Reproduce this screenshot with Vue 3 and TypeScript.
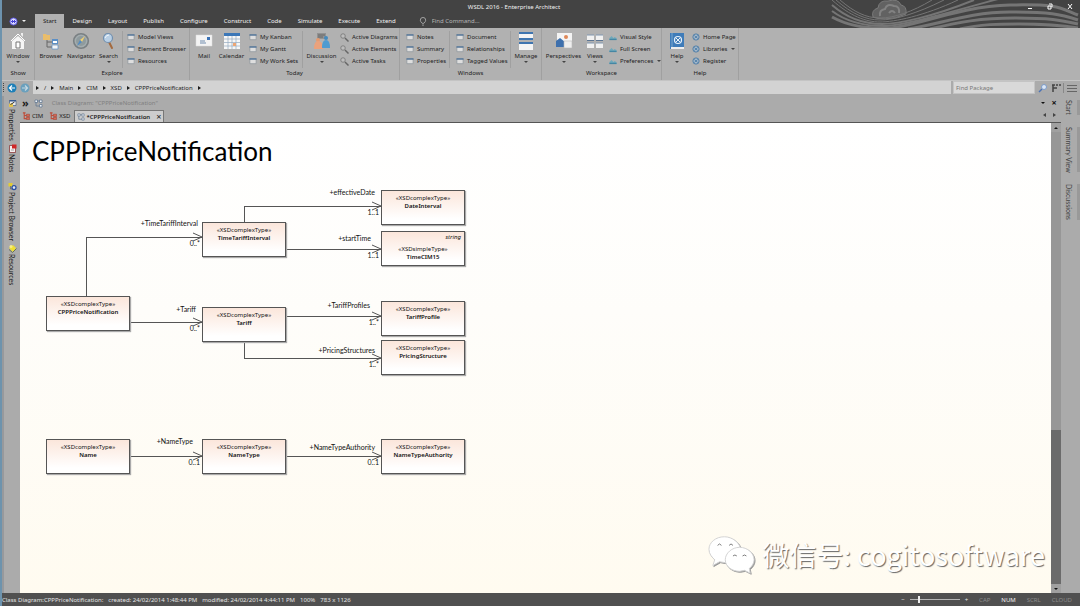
<script setup lang="ts">
import { ref } from 'vue'

interface BigTool { kind: 'big'; label: string; icon: string; menu?: boolean }
interface ListTool { kind: 'list'; icon: string; items: { label: string; menu?: boolean }[] }
interface Group { name: string; tools: (BigTool | ListTool)[] }

const icons: Record<string, string> = {
  house: '<path d="M1 9 9 1l8 8-1 1-7-7-7 7z" fill="#fff" stroke="#8d8d8d" stroke-width=".5"/><path d="M12 1h2v4l-2-2z" fill="#eee"/><path d="M3 9l6-5 6 5v8H3z" fill="#f6f6f6"/><path d="M7 10h4v6H7z" fill="#fff" stroke="#777" stroke-width="1"/>',
  browser: '<path d="M1 2h3l1 1h3v5H1z" fill="#e9bd6b"/><path d="M5 8v7h5M5 10h5" fill="none" stroke="#666"/><path d="M10 7h6v5h-6z" fill="#5b8fc6"/><path d="M11 9h4v2h-4z" fill="#fff"/><path d="M10 13h6v4h-6z" fill="#f5f5f5" stroke="#5b8fc6" stroke-width=".7"/>',
  compass: '<circle cx="9" cy="9" r="7.3" fill="#a4adaf" stroke="#7a8083" stroke-width="1.6"/><circle cx="9" cy="9" r="5" fill="#8f9b9e"/><path d="M13 4l-3 6-2-2z" fill="#f1cf70"/><path d="M5 14l3-6 2 2z" fill="#4f8bc4"/>',
  search: '<path d="M9 10l3 6" stroke="#a46a3e" stroke-width="2" stroke-linecap="round"/><circle cx="8" cy="6" r="4.5" fill="#b9d0e6" stroke="#718fae" stroke-width="1.2"/><path d="M5 6q1-3 4-3" stroke="#f3f8fc" fill="none"/>',
  mail: '<path d="M1 3h16v11H1z" fill="#f4f4f4" stroke="#ddd" stroke-width=".5"/><path d="M12 5h3v3h-3z" fill="#3b72b5"/><path d="M5 9h5M5 11h6" stroke="#718cad"/>',
  calendar: '<path d="M1 1h16v16H1z" fill="#f7f7f7"/><path d="M1 1h16v3H1z" fill="#3b77b8"/><path d="M5 4v13M9 4v13M13 4v13M1 7h16M1 10.500h16M1 14h16" stroke="#92a9c0" stroke-width=".7"/><path d="M10 11h3v3h-3z" fill="#eda675"/>',
  people: '<path d="M4 1h9v6H4z" fill="#929292"/><path d="M5 3h7M5 5h5" stroke="#555" stroke-width=".7"/><circle cx="5" cy="8" r="2" fill="#e69b70"/><path d="M1 17q0-8 4-8 5 0 5 8z" fill="#eba27c"/><circle cx="13" cy="6" r="2" fill="#438abe"/><path d="M9 16q0-8 4-8t4 8z" fill="#4f9bd0"/>',
  manage: '<path d="M2 0h14v8H2zM2 10h14v8H2z" fill="#f4f4f4"/><path d="M2 0h14v2H2zM2 6h14v2H2zM2 10h14v2H2z" fill="#3f75b0"/>',
  perspectives: '<path d="M2 1h15v13H2z" fill="#f4f4f4"/><circle cx="11" cy="5" r="2" fill="#dd8758"/><path d="M1 15V9l4-3 5 4v5z" fill="#3e70ad"/><path d="M9 9h8v7H9z" fill="#eee" stroke="#bbb" stroke-width=".6"/>',
  views: '<path d="M1 3h7v6H1zM10 3h7v6h-7zM1 11h7v5H1zM10 11h7v5h-7z" fill="#f1f1f1"/><path d="M1 8h7v1H1zM10 8h7v1h-7z" fill="#5c7592"/><path d="M1 3h7M10 3h7M1 11h7M10 11h7" stroke="#8197b0"/>',
  help: '<path d="M2 1h14v16H2z" fill="#3f7cb9"/><path d="M3 15h13v2H3z" fill="#eee"/><path d="M4 1v14" stroke="#79a7d0"/><circle cx="10" cy="8" r="3.500" fill="none" stroke="#e9f2fa" stroke-width="1.200"/><path d="M8 6l4 4M12 6l-4 4" stroke="#e9f2fa"/>',
  window: '<path d="M2 4h14v11H2z" fill="#dedede" stroke="#8a9299" stroke-width="1.500"/><path d="M1 3h16v3H1z" fill="#4c7198"/>',
  lens: '<path d="M10 10l7 7" stroke="#666" stroke-width="3"/><circle cx="6" cy="6" r="4.500" fill="#bdbdbd" stroke="#707070" stroke-width="1.500"/>',
  scene: '<path d="M1 16V11l5-4 4 4 3-2 4 3v4z" fill="#6fa9bb"/><path d="M1 13h16v3H1z" fill="#4586a3"/>',
  globe: '<circle cx="9" cy="9" r="7" fill="#a6b9ca" stroke="#4779a6" stroke-width="2"/><path d="M5 5l8 8M13 5l-8 8M6 9h6" stroke="#4779a6" stroke-width="1.500"/>',
  tree: '<path d="M2 2h6M5 2v13h5M5 8h5" fill="none" stroke="#be4d3a" stroke-width="2.500"/><path d="M10 5h7v5h-7zM10 12h7v5h-7z" fill="#d86955" stroke="#913022"/>',
  diagram: '<path d="M2 2h5v5H2zM11 2h5v5h-5zM11 11h5v5h-5z" fill="#eef2f7" stroke="#627790" stroke-width="1.500"/><path d="M4 7v7h7M7 4h4" fill="none" stroke="#627790" stroke-width="1.500"/>',
  props: '<path d="M3 3h13v10H3z" fill="#eee" stroke="#4d648a" stroke-width="1.500"/><path d="M3 2h13v3H3z" fill="#37598f"/><path d="M2 9h8v7H2z" fill="#e3c34d"/><path d="M5 11l8-5" stroke="#333" stroke-width="2"/>',
  notes: '<path d="M3 3h12v14H3z" fill="#f6eeee" stroke="#873232" stroke-width="1.500"/><path d="M8 1h9v8H8z" fill="#cf2727"/><path d="M6 12h6" stroke="#555"/>',
  project: '<path d="M1 2h8v7H1z" fill="#e3cd31"/><path d="M5 8v6h5" fill="none" stroke="#444"/><circle cx="12" cy="11" r="4" fill="#dfe7f5" stroke="#294ea0" stroke-width="2.500"/>',
  resources: '<path d="M2 8l8-6 6 6-6 8z" fill="#efdf34"/><path d="M2 11l7 6 8-8" fill="none" stroke="#66705b" stroke-width="2"/><circle cx="6" cy="5" r="3" fill="#f7ee86"/>',
}

const win = (...labels: string[]): ListTool => ({ kind: 'list', icon: 'window', items: labels.map(label => ({ label })) })
const big = (label: string, icon: string, menu = false): BigTool => ({ kind: 'big', label, icon, menu })

const groups: Group[] = [
  { name: 'Show', tools: [big('Window', 'house', true)] },
  { name: 'Explore', tools: [big('Browser', 'browser'), big('Navigator', 'compass'), big('Search', 'search', true), win('Model Views', 'Element Browser', 'Resources')] },
  { name: 'Today', tools: [big('Mail', 'mail'), big('Calendar', 'calendar'), win('My Kanban', 'My Gantt', 'My Work Sets'), big('Discussion', 'people', true),
    { kind: 'list', icon: 'lens', items: [{ label: 'Active Diagrams' }, { label: 'Active Elements' }, { label: 'Active Tasks' }] }] },
  { name: 'Windows', tools: [win('Notes', 'Summary', 'Properties'), win('Document', 'Relationships', 'Tagged Values'), big('Manage', 'manage', true)] },
  { name: 'Workspace', tools: [big('Perspectives', 'perspectives', true), big('Views', 'views', true),
    { kind: 'list', icon: 'scene', items: [{ label: 'Visual Style' }, { label: 'Full Screen' }, { label: 'Preferences', menu: true }] }] },
  { name: 'Help', tools: [big('Help', 'help', true),
    { kind: 'list', icon: 'globe', items: [{ label: 'Home Page' }, { label: 'Libraries', menu: true }, { label: 'Register' }] }] },
]

const menus = ['Start', 'Design', 'Layout', 'Publish', 'Configure', 'Construct', 'Code', 'Simulate', 'Execute', 'Extend']
const activeMenu = ref('Start')
const crumbs = ['/', 'Main', 'CIM', 'XSD', 'CPPPriceNotification']
const leftDock = [
  { label: 'Properties', icon: 'props' },
  { label: 'Notes', icon: 'notes' },
  { label: 'Project Browser', icon: 'project' },
  { label: 'Resources', icon: 'resources' },
]
const rightDock = ['Start', 'Summary View', 'Discussions']
const zoom = ref(18)
const findPackage = ref('')

const nodes = [
  { name: 'CPPPriceNotification', x: 26, y: 173 },
  { name: 'TimeTariffInterval', x: 182, y: 99 },
  { name: 'Tariff', x: 182, y: 184 },
  { name: 'DateInterval', x: 361, y: 67 },
  { name: 'TimeCIM15', x: 361, y: 108, base: 'string' },
  { name: 'TariffProfile', x: 361, y: 178 },
  { name: 'PricingStructure', x: 361, y: 217 },
  { name: 'Name', x: 26, y: 316 },
  { name: 'NameType', x: 182, y: 316 },
  { name: 'NameTypeAuthority', x: 361, y: 316 },
]
const edges = [
  { pts: [[66, 174], [66, 114], [182, 114]], role: '+TimeTariffInterval', rx: 178, ry: 102, card: '0..*' },
  { pts: [[110, 199], [182, 199]], role: '+Tariff', rx: 176, ry: 188, card: '0..*' },
  { pts: [[224, 99], [224, 83], [361, 83]], role: '+effectiveDate', rx: 355, ry: 71, card: '1..1' },
  { pts: [[265, 126], [361, 126]], role: '+startTime', rx: 351, ry: 117, card: '1..1' },
  { pts: [[265, 193], [361, 193]], role: '+TariffProfiles', rx: 350, ry: 184, card: '1..*' },
  { pts: [[224, 218], [224, 235], [361, 235]], role: '+PricingStructures', rx: 355, ry: 229, card: '1..*' },
  { pts: [[110, 333], [182, 333]], role: '+NameType', rx: 173, ry: 320, card: '0..1' },
  { pts: [[265, 333], [361, 333]], role: '+NameTypeAuthority', rx: 355, ry: 326, card: '0..1' },
]
const end = (pts: number[][]) => pts[pts.length - 1]
</script>

<template>
  <div class="app">
    <header class="head">
      <svg class="swirl" viewBox="0 0 260 28" aria-hidden="true">
        <path d="M53 17q-2-7 5-9 1-8 10-7 10-3 13 4 6 1 5 9-10 5-21 5-8 0-12-2z" fill="#626262" stroke="#7a7a7a" />
        <path d="M60 16q-1-6 5-7 2-6 9-3 6 0 5 7M69 13q3-4 6 0" fill="none" stroke="#828282" stroke-width="2" />
        <g fill="none" stroke="#757575">
          <path d="M20 0C34 12 46 18 60 18S92 12 112 0" />
          <path d="M16 0C32 14 46 20 60 20S96 14 124 0" />
          <path d="M12 0C30 16 46 22 60 22S104 16 138 0" />
          <path d="M12 5C28 19 46 24 62 24S112 17 154 0" stroke-width="2" />
          <path d="M12 11C28 23 46 26 64 26S124 14 178 -1" stroke-width="2" />
          <path d="M12 17C28 26 46 29 70 28S140 6 190 5S240 8 258 15" stroke-width="3" />
          <path d="M88 29C120 24 150 12 190 12S240 14 258 20" stroke-width="3" />
          <path d="M110 29C140 22 160 18 195 18S240 20 258 24" stroke-width="3" />
          <path d="M140 29C160 24 180 24 200 24S240 25 258 28" stroke-width="3" />
        </g>
      </svg>
      <div class="title-row">
        <span class="title">WSDL 2016 - Enterprise Architect</span>
        <div class="win-buttons">
          <button aria-label="Minimize"><svg viewBox="0 0 8 8"><path d="M2 6h4v1H2z" fill="#fff" /></svg></button>
          <button aria-label="Restore"><svg viewBox="0 0 8 8"><path d="M3 2h3v3M2 4h3v3H2z" fill="none" stroke="#fff" /></svg></button>
          <button aria-label="Close"><svg viewBox="0 0 8 8"><path d="M2 2l4 5M6 2L2 7" stroke="#fff" /></svg></button>
        </div>
      </div>
      <nav class="menu-row">
        <button class="app-button" aria-label="Application menu">
          <svg viewBox="0 0 10 10"><circle cx="5" cy="5" r="4" fill="#dcdcff" stroke="#5a55e0" /><path d="M3 3l4 4M7 3L3 7M2 5h6" stroke="#3a35d0" /></svg>
          <i class="down"></i>
        </button>
        <button v-for="m in menus" :key="m" class="menu" :class="{ active: m === activeMenu }" @click="activeMenu = m">{{ m }}</button>
        <label class="command">
          <svg viewBox="0 0 8 10" aria-hidden="true"><path d="M3 7Q1 5 1 3.500a3 3 0 0 1 6 0Q7 5 5 7zM3 9h2" fill="none" stroke="#a8a8a8" /></svg>
          <input type="text" placeholder="Find Command..." aria-label="Find Command" />
        </label>
      </nav>
    </header>

    <section class="ribbon">
      <div v-for="g in groups" :key="g.name" class="group" :class="g.name.toLowerCase()">
        <div class="tools">
          <template v-for="(t, i) in g.tools" :key="i">
            <button v-if="t.kind === 'big'" class="big">
              <svg viewBox="0 0 18 18" v-html="icons[t.icon]"></svg>
              <span>{{ t.label }}</span>
              <i v-if="t.menu" class="down"></i>
            </button>
            <div v-else class="list">
              <button v-for="item in t.items" :key="item.label" class="small">
                <svg viewBox="0 0 18 18" v-html="icons[t.icon]"></svg>
                <span>{{ item.label }}</span>
                <i v-if="item.menu" class="down"></i>
              </button>
            </div>
          </template>
        </div>
        <div class="group-name">{{ g.name }}</div>
      </div>
    </section>

    <div class="address">
      <i class="grip"></i>
      <button class="round" aria-label="Back"><svg viewBox="0 0 10 10"><circle cx="5" cy="5" r="4.500" fill="#1c7fb8" /><path d="M8 5H2.500M5 2.500L2.500 5 5 7.500" fill="none" stroke="#fff" stroke-width="1.200" /></svg></button>
      <button class="round" aria-label="Forward"><svg viewBox="0 0 10 10"><circle cx="5" cy="5" r="4.500" fill="#6aa0bd" /><path d="M2 5h5.500M5 2.500L7.500 5 5 7.500" fill="none" stroke="#c5d8e2" stroke-width="1.200" /></svg></button>
      <div class="crumbs">
        <i class="right"></i>
        <template v-for="c in crumbs" :key="c"><a href="#">{{ c }}</a><i class="right"></i></template>
      </div>
      <input v-model="findPackage" class="find" type="text" placeholder="Find Package" aria-label="Find Package" />
      <button class="tool" aria-label="Search"><svg viewBox="0 0 10 10"><path d="M4 6L1 9" stroke="#4c73b5" stroke-width="1.500" /><circle cx="6" cy="4" r="2.500" fill="#dbe7f7" stroke="#7d9cc9" /></svg></button>
      <button class="tool" aria-label="Layout options"><svg viewBox="0 0 10 10"><path d="M1 2h3M5 2h2M8 2h2M2 2v7M2 5h4" stroke="#444" stroke-width="1.500" /></svg></button>
      <button class="tool last" aria-label="Menu"><svg viewBox="0 0 10 10" shape-rendering="crispEdges"><path d="M0 2h10v1H0zM0 5h10v1H0zM0 8h10v1H0z" fill="#666" /></svg></button>
    </div>

    <div class="work">
      <aside class="left-dock">
        <button v-for="d in leftDock" :key="d.label">
          <svg viewBox="0 0 18 18" v-html="icons[d.icon]"></svg><span>{{ d.label }}</span>
        </button>
      </aside>
      <main class="doc">
        <div class="doc-head">
          <span class="chev">»</span>
          <svg viewBox="0 0 18 18" v-html="icons.diagram"></svg>
          <span class="doc-title">Class Diagram: "CPPPriceNotification"</span>
          <button class="mini" aria-label="Window list"><i class="down"></i></button>
          <button class="mini" aria-label="Close diagram">×</button>
        </div>
        <div class="doc-tabs">
          <button class="doc-tab"><svg viewBox="0 0 18 18" v-html="icons.tree"></svg>CIM</button>
          <button class="doc-tab"><svg viewBox="0 0 18 18" v-html="icons.tree"></svg>XSD</button>
          <button class="doc-tab active"><svg viewBox="0 0 18 18" v-html="icons.diagram"></svg>*CPPPriceNotification<b>×</b></button>
          <button class="mini first" aria-label="Previous tab"><i class="left"></i></button>
          <button class="mini" aria-label="Next tab"><i class="right"></i></button>
        </div>
        <div class="doc-body">
          <div class="canvas">
            <h1>CPPPriceNotification</h1>
            <svg class="wires" width="480" height="400" aria-hidden="true">
              <g v-for="e in edges" :key="e.role" fill="none" stroke="#555">
                <polyline :points="e.pts.join(' ')" shape-rendering="crispEdges" />
                <path :d="`M${end(e.pts)[0] - 9} ${end(e.pts)[1] - 4}l9 4-9 4`" />
              </g>
            </svg>
            <template v-for="e in edges" :key="e.role">
              <span class="role" :style="{ left: e.rx - 100 + 'px', top: e.ry - 7 + 'px' }">{{ e.role }}</span>
              <span class="role" :style="{ left: end(e.pts)[0] - 102 + 'px', top: end(e.pts)[1] + 1 + 'px' }">{{ e.card }}</span>
            </template>
            <div v-for="n in nodes" :key="n.name" class="node" :style="{ left: n.x + 'px', top: n.y + 'px' }">
              <em v-if="n.base">{{ n.base }}</em>
              <span>{{ n.base ? '«XSDsimpleType»' : '«XSDcomplexType»' }}</span>
              <strong>{{ n.name }}</strong>
            </div>
            <div class="watermark">
              <svg viewBox="0 0 50 42" aria-hidden="true">
                <g fill="#fff" stroke="#d2d2d2" stroke-width="1">
                  <path d="M17 2C8 2 1 8 1 15c0 5 3 8 6 11l-2 6 7-4 6 1c9 0 16-6 16-13S26 2 17 2z" />
                  <path d="M33 13c-8 0-15 6-15 13s7 12 15 12l5-1 6 3-1-5c3-2 5-6 5-9 0-7-7-13-15-13z" />
                </g>
                <path d="M10 11q2-3 4 0M22 11q2-3 4 0M26 22q2-2 4 0M36 22q2-2 4 0" fill="none" stroke="#777" />
              </svg>
              <span>微信号: cogitosoftware</span>
            </div>
          </div>
          <div class="scroll">
            <button aria-label="Scroll up"><i class="up"></i></button>
            <div class="thumb"></div>
            <div class="track"></div>
            <button aria-label="Scroll down"><i class="down"></i></button>
          </div>
        </div>
      </main>
      <aside class="right-dock">
        <button v-for="d in rightDock" :key="d">{{ d }}</button>
      </aside>
    </div>

    <footer class="status">
      <span>Class Diagram:CPPPriceNotification:</span>
      <span>created: 24/02/2014 1:48:44 PM</span>
      <span>modified: 24/02/2014 4:44:11 PM</span>
      <span>100%</span>
      <span>783 x 1126</span>
      <div class="status-right">
        <button aria-label="Zoom out">−</button>
        <input v-model="zoom" type="range" min="0" max="100" aria-label="Zoom" />
        <button aria-label="Zoom in">+</button>
        <span class="flag">CAP</span><span class="flag on">NUM</span><span class="flag">SCRL</span><span class="flag">CLOUD</span>
      </div>
    </footer>
  </div>
</template>

<style>
body { margin: 0; background: #ababab; }
</style>

<style scoped>
.app { min-height: 100vh; display: flex; flex-direction: column; box-sizing: border-box; border-left: 2px solid #6d93ad; background: #ababab; color: #1c1c1c; font: 6px/10px "Noto Sans", sans-serif; white-space: nowrap; overflow: hidden; }
button, input { font: inherit; color: inherit; background: none; border: 0; padding: 0; margin: 0; }
button { display: flex; align-items: center; justify-content: center; }
a { color: inherit; text-decoration: none; }
svg { display: block; flex: none; }
i { flex: none; }
.down { border: 2px solid transparent; border-top-color: currentColor; border-bottom: 0; }
.up { border: 2px solid transparent; border-bottom-color: currentColor; border-top: 0; }
.right { border: 2px solid transparent; border-left: 3px solid currentColor; border-right: 0; }
.left { border: 2px solid transparent; border-right: 3px solid currentColor; border-left: 0; }

.head { position: relative; background: #434343; color: #f2f2f2; }
.swirl { position: absolute; right: 0; top: 0; width: 260px; height: 28px; overflow: hidden; }
.title-row { position: relative; height: 14px; display: flex; align-items: center; justify-content: center; }
.title { margin-right: 54px; }
.win-buttons { position: absolute; right: 6px; top: 2px; display: flex; gap: 12px; }
.win-buttons svg { width: 8px; height: 8px; }
.menu-row { position: relative; height: 14px; display: flex; align-items: stretch; }
.app-button { width: 33px; gap: 4px; padding-right: 2px; box-sizing: border-box; }
.app-button svg { width: 9px; height: 9px; }
.menu { padding: 0 8px; }
.menu.active { background: #b1b1b1; color: #222; }
.command { display: flex; align-items: center; gap: 5px; margin-left: 15px; color: #b5b5b5; }
.command svg { width: 8px; height: 9px; }
.command input { width: 70px; }
.command input::placeholder, .find::placeholder { color: inherit; opacity: 1; }

.ribbon { display: flex; height: 52px; background: #b1b1b1; border-bottom: 1px solid #c4c4c4; }
.group { display: flex; flex-direction: column; border-right: 1px solid #a0a0a0; box-sizing: border-box; }
.tools { display: grid; height: 40px; padding-top: 3px; box-sizing: border-box; }
.group-name { text-align: center; }
.show { width: 33px; }
.explore { width: 155px; }
.explore .tools { grid-template-columns: 32px 28px 27px 1fr; }
.today { width: 210px; }
.today .tools { grid-template-columns: 28px 27px 57px 38px 1fr; }
.windows { width: 142px; }
.windows .tools { grid-template-columns: 49px 61px 1fr; }
.workspace { width: 120px; }
.workspace .tools { grid-template-columns: 43px 20px 1fr; }
.help { width: 77px; }
.help .tools { grid-template-columns: 30px 1fr; }
.big { flex-direction: column; justify-content: flex-start; min-width: 0; }
.big svg { width: 18px; height: 18px; margin: 1px 0; }
.big .down, .small .down { color: #444; }
.list { display: flex; flex-direction: column; padding-left: 4px; }
.small { height: 12px; justify-content: flex-start; gap: 3px; }
.small svg { width: 8px; height: 8px; }
.small .down { margin-left: 1px; }
.explore .list, .windows .list + .list, .windows .big, .today .big:nth-child(4) { border-left: 1px solid #a0a0a0; }
.today .list:last-child { padding-left: 0; }
.today .list:last-child svg { width: 9px; height: 9px; }
.windows .list { padding-left: 6px; }
.help .list { padding-left: 0; }

.address { display: flex; align-items: center; height: 13px; gap: 2px; }
.grip { width: 2px; height: 9px; margin-left: 1px; border-left: 1px dotted #444; box-sizing: border-box; }
.round svg { width: 10px; height: 10px; }
.round { margin-right: 1px; }
.crumbs { flex: 1; height: 13px; display: flex; align-items: center; gap: 5px; padding-left: 3px; background: #d3d3d3; }
.find { width: 82px; height: 13px; box-sizing: border-box; border: 1px solid #c4c4c4; background: #d9d9d9; color: #777; padding: 0 2px; }
.tool { width: 11px; }
.tool svg { width: 10px; height: 10px; }
.tool.last { width: 17px; border-left: 1px solid #888; }

.work { flex: 1; display: flex; padding-top: 2px; }
.left-dock { width: 18px; display: flex; flex-direction: column; padding-top: 3px; box-sizing: border-box; border-left: 2px solid #97999c; }
.left-dock button { flex-direction: column; gap: 1px; margin-bottom: 3px; }
.left-dock button:nth-child(2) { margin-bottom: 10px; }
.left-dock svg { width: 9px; height: 9px; }
.left-dock, .right-dock { font: 7px/10px Lato, sans-serif; }
.left-dock span, .right-dock button { writing-mode: vertical-rl; }
.doc { flex: 1; min-width: 0; display: flex; flex-direction: column; }
.doc-head { display: flex; align-items: center; height: 14px; gap: 5px; padding-left: 2px; }
.doc-head svg { width: 9px; height: 9px; }
.chev { font-size: 11px; font-weight: 700; }
.doc-title { flex: 1; margin-left: 4px; color: #808080; }
.mini { width: 6px; height: 10px; color: #111; }
.doc-head .mini:last-child, .doc-tabs .mini:last-child { margin-right: 4px; }
.doc-head .mini:last-child { font-weight: 700; font-size: 9px; }
.doc-tabs .mini { color: #444; }
.doc-tabs { display: flex; align-items: stretch; height: 13px; box-sizing: border-box; border-bottom: 1px solid #555; }
.doc-tab { gap: 2px; padding: 0 2px; margin-right: 2px; }
.doc-tab svg { width: 8px; height: 8px; }
.doc-tab.active { gap: 1px; background: #cdcdcd; border: 1px solid #777; border-bottom: 0; font-weight: 600; }
.doc-tab b { margin-left: 5px; font-size: 9px; font-weight: 400; }
.doc-tabs .first { margin-left: auto; margin-right: 4px; }
.doc-body { flex: 1; display: flex; }
.canvas { flex: 1; position: relative; overflow: hidden; background: linear-gradient(#ffffff, #fefdfa 40%, #fffbf0); }
h1 { margin: 10px 0 0 12px; font: 400 26px/36px Lato, sans-serif; color: #000; }
.wires { position: absolute; left: 0; top: 0; }
.role { position: absolute; width: 100px; text-align: right; font: 7px/10px Lato, sans-serif; color: #111; }
.node { position: absolute; width: 84px; height: 35px; box-sizing: border-box; border: 1px solid #555; box-shadow: 1px 1px 1px #aaa; background: linear-gradient(#fbe6db, #fff 85%); display: flex; flex-direction: column; align-items: center; padding-top: 3px; line-height: 8px; color: #111; }
.node em { align-self: flex-end; margin: -2px 3px 4px 0; }
.node strong { font-weight: 600; }
.watermark { position: absolute; right: 6px; bottom: 17px; display: flex; align-items: center; gap: 7px; font: 400 27px/40px "Noto Sans CJK SC", sans-serif; color: #fff; text-shadow: 1px 1px 1px #666; }
.watermark svg { width: 48px; height: 42px; filter: drop-shadow(1px 1px 0 #999); }
.scroll { width: 10px; display: flex; flex-direction: column; background: #6b6b6b; }
.scroll button { height: 9px; background: #a0a0a0; color: #111; }
.thumb { flex: 298; background: #979797; }
.track { flex: 154; }
.right-dock { width: 19px; display: flex; flex-direction: column; align-items: stretch; gap: 12px; padding-top: 4px; box-sizing: border-box; color: #444; }
.right-dock button { width: 19px; box-sizing: border-box; justify-content: flex-start; border-right: 3px solid #999; }

.status { height: 13px; display: flex; align-items: center; gap: 5px; background: #505050; color: #e5e5e5; }
.status-right { margin-left: auto; display: flex; align-items: center; gap: 5px; padding-right: 8px; }
.status-right input { appearance: none; width: 50px; height: 8px; background: linear-gradient(#b5b5b5, #b5b5b5) center / 100% 1px no-repeat; }
.status-right input::-webkit-slider-thumb { appearance: none; width: 2px; height: 7px; background: #eee; }
.flag { margin-left: 6px; color: #8c8c8c; }
.flag.on { color: #f2f2f2; }
</style>
